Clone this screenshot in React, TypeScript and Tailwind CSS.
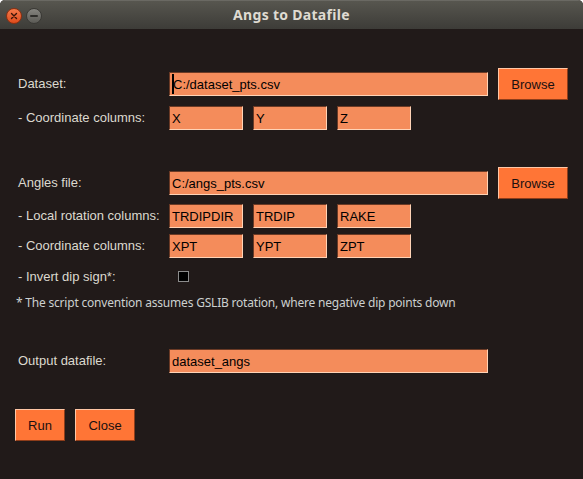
import React from "react";

const sans = { fontFamily: '"Liberation Sans", Arial, sans-serif' };

function Entry({ w, value, cursor }: { w: string; value: string; cursor?: boolean }) {
  return (
    <div
      className={`${w} h-[24px] flex items-center bg-[#f48c5b] border-t border-l border-t-[#6b3a25] border-l-[#6b3a25] border-b border-r border-b-[#ffd3b6] border-r-[#ffd3b6] pl-[2px] text-[13px] text-black leading-none relative`}
      style={sans}
    >
      {cursor && <span className="inline-block w-[2px] h-[20px] bg-black -mr-[1px]" />}
      <span className="whitespace-pre">{value}</span>
    </div>
  );
}

function Btn({ w, label }: { w: string; label: string }) {
  return (
    <div
      className={`${w} h-[32px] flex items-center justify-center bg-[#ff7536] border-t border-l border-t-[#ffc7a6] border-l-[#ffc7a6] border-b border-r border-b-[#8e3d1a] border-r-[#8e3d1a] text-[13px] text-[#1a1010] pt-[1px]`}
      style={sans}
    >
      {label}
    </div>
  );
}

function Label({ children }: { children: React.ReactNode }) {
  return (
    <div className="w-[151px] shrink-0 text-[13px] text-[#dcd9cf] whitespace-pre" style={sans}>
      {children}
    </div>
  );
}

export default function App() {
  return (
    <div className="w-[583px] h-[479px] bg-white">
      <div className="w-[583px] h-[479px] rounded-t-[5px] overflow-hidden bg-[#211a19] flex flex-col">
        <div className="h-[29px] shrink-0 bg-gradient-to-b from-[#57564f] to-[#3d3c38] border-t border-t-[#6a6963] relative flex items-center justify-center">
          <div className="absolute left-[6px] top-[7px] w-[16px] h-[16px] rounded-full bg-gradient-to-b from-[#f47a4a] to-[#df4b1a] border border-[#8d2f10] flex items-center justify-center">
            <svg width="8" height="8" viewBox="0 0 8 8">
              <path d="M1.5 1.5 L6.5 6.5 M6.5 1.5 L1.5 6.5" stroke="#3a1408" strokeWidth="1.4" strokeLinecap="round" />
            </svg>
          </div>
          <div className="absolute left-[26px] top-[7px] w-[16px] h-[16px] rounded-full bg-gradient-to-b from-[#85847f] to-[#5c5b56] border border-[#3a3935] flex items-center justify-center">
            <div className="w-[8px] h-[2px] bg-[#2e2d2a] rounded-full" />
          </div>
          <div
            className="text-[14px] font-bold text-[#dfdbd2] tracking-[0.3px] -mt-[1px]"
            style={{ fontFamily: '"Noto Sans", "Open Sans", sans-serif' }}
          >
            Angs to Datafile
          </div>
        </div>

        <div className="flex flex-col pl-[18px]">
          <div className="mt-[39px] h-[32px] flex items-center">
            <Label>Dataset:</Label>
            <Entry w="w-[319px]" value="C:/dataset_pts.csv" cursor />
            <div className="ml-[10px]">
              <Btn w="w-[70px]" label="Browse" />
            </div>
          </div>
          <div className="mt-[6px] h-[24px] flex items-center">
            <Label>- Coordinate columns:</Label>
            <div className="flex gap-[10px]">
              <Entry w="w-[74px]" value="X" />
              <Entry w="w-[74px]" value="Y" />
              <Entry w="w-[74px]" value="Z" />
            </div>
          </div>

          <div className="mt-[37px] h-[32px] flex items-center">
            <Label>Angles file:</Label>
            <Entry w="w-[319px]" value="C:/angs_pts.csv" />
            <div className="ml-[10px]">
              <Btn w="w-[70px]" label="Browse" />
            </div>
          </div>
          <div className="mt-[5px] h-[24px] flex items-center">
            <Label>- Local rotation columns:</Label>
            <div className="flex gap-[10px]">
              <Entry w="w-[74px]" value="TRDIPDIR" />
              <Entry w="w-[74px]" value="TRDIP" />
              <Entry w="w-[74px]" value="RAKE" />
            </div>
          </div>
          <div className="mt-[6px] h-[24px] flex items-center">
            <Label>- Coordinate columns:</Label>
            <div className="flex gap-[10px]">
              <Entry w="w-[74px]" value="XPT" />
              <Entry w="w-[74px]" value="YPT" />
              <Entry w="w-[74px]" value="ZPT" />
            </div>
          </div>
          <div className="mt-[6px] h-[26px] flex items-center">
            <Label>- Invert dip sign*:</Label>
            <div className="ml-[9px] w-[11px] h-[11px] bg-black border border-[#8c8c8c] -mt-[1px]" />
          </div>
          <div
            className="mt-[2px] h-[22px] flex items-center -ml-[2px] text-[12px] tracking-[-0.2px] text-[#ccd0cf]"
            style={{ fontFamily: '"Noto Sans", "Open Sans", sans-serif' }}
          >
            * The script convention assumes GSLIB rotation, where negative dip points down
          </div>

          <div className="mt-[35px] h-[24px] flex items-center">
            <Label>Output datafile:</Label>
            <Entry w="w-[319px]" value="dataset_angs" />
          </div>

          <div className="mt-[36px] h-[32px] flex items-center gap-[10px] -ml-[3px]">
            <Btn w="w-[50px]" label="Run" />
            <Btn w="w-[60px]" label="Close" />
          </div>
        </div>
      </div>
    </div>
  );
}
